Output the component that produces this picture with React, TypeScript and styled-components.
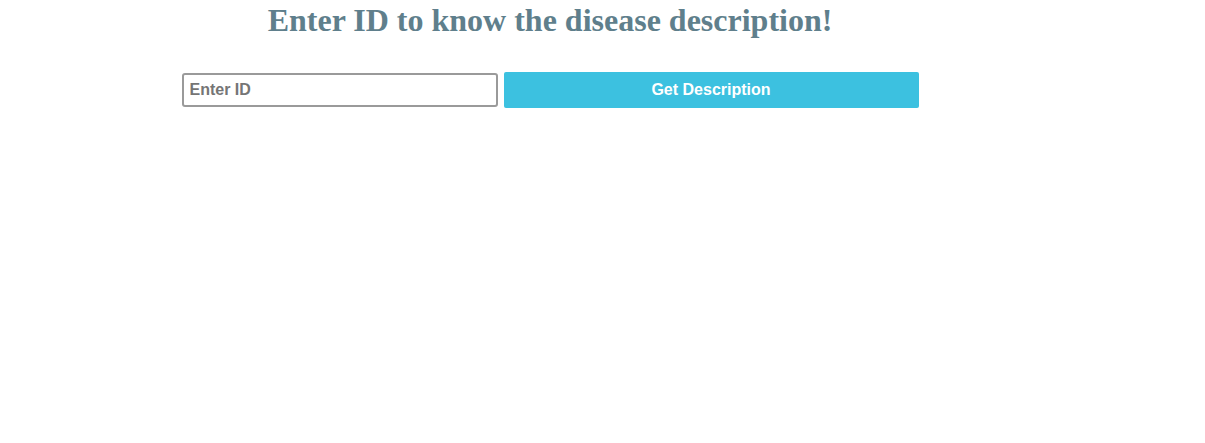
import * as React from "react";
import styled, { createGlobalStyle } from "styled-components";

const GlobalStyle = createGlobalStyle`
    html, body {
        margin: 0;
        padding: 0;
        background: #ffffff;
    }
`;

export default function App() {
    const [id, setId] = React.useState("");

    return (
        <>
            <GlobalStyle />
            <PageDiv>
                <TitleH1>Enter ID to know the disease description!</TitleH1>
                <FormDiv>
                    <IdInput
                        type="text"
                        placeholder="Enter ID"
                        value={id}
                        onChange={(e) => setId(e.target.value)}
                    />
                    <SubmitButton type="button">Get Description</SubmitButton>
                </FormDiv>
            </PageDiv>
        </>
    );
}

const PageDiv = styled.div`
    width: 1100px;
    display: flex;
    flex-direction: column;
    align-items: center;
`

const TitleH1 = styled.h1`
    margin: 0;
    padding-top: 2px;
    font-family: "Liberation Serif", "Times New Roman", serif;
    font-size: 32px;
    font-weight: bold;
    line-height: 37px;
    color: #5f7f8c;
`

const FormDiv = styled.div`
    display: flex;
    align-items: center;
    gap: 6px;
    margin-top: 33px;
    width: 737px;
`

const IdInput = styled.input`
    box-sizing: border-box;
    width: 316px;
    height: 34px;
    padding: 0 6px;
    border: 2px solid #9a9a9a;
    border-radius: 3px;
    font-family: "Liberation Sans", Arial, sans-serif;
    font-size: 16px;
    font-weight: bold;
    color: #555555;
    outline: none;

    &::placeholder {
        color: #757575;
    }
`

const SubmitButton = styled.button`
    box-sizing: border-box;
    width: 415px;
    height: 36px;
    border: none;
    border-radius: 2px;
    background: #3cc1e0;
    color: #ffffff;
    font-family: "Liberation Sans", Arial, sans-serif;
    font-size: 16px;
    font-weight: bold;
    cursor: pointer;
`
